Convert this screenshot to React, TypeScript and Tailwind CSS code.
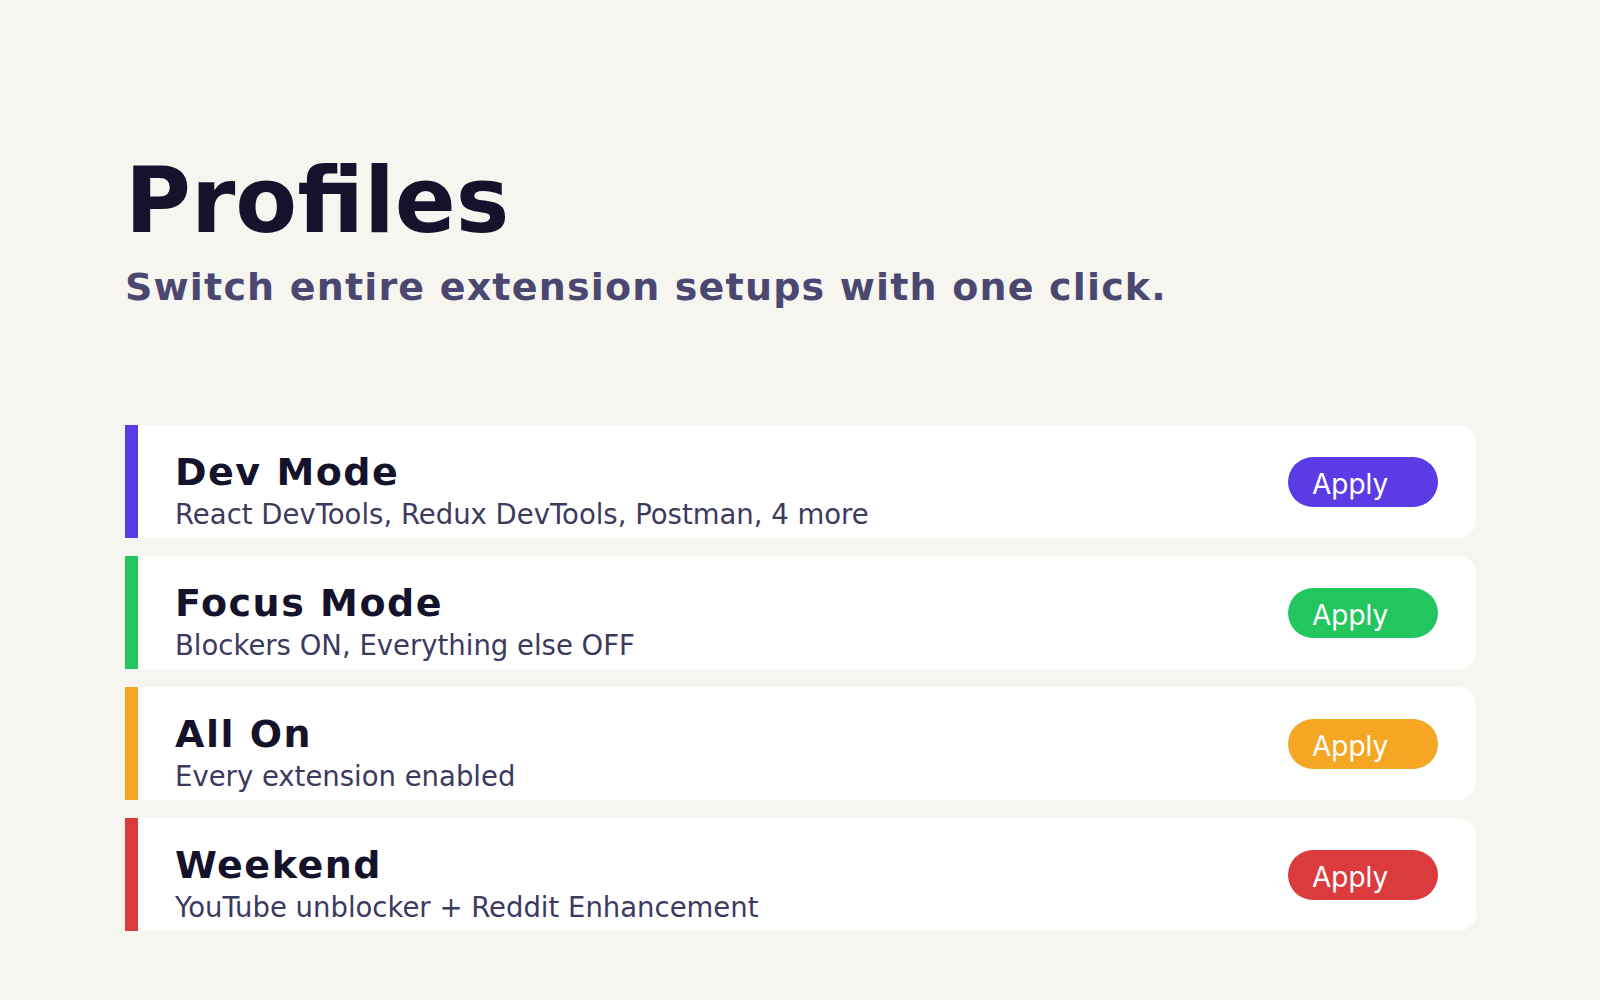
const profiles = [
  { name: "Dev Mode", detail: "React DevTools, Redux DevTools, Postman, 4 more", bar: "bg-[#5a3be6]", button: "bg-[#5a3be6]" },
  { name: "Focus Mode", detail: "Blockers ON, Everything else OFF", bar: "bg-[#22c55e]", button: "bg-[#22c55e]" },
  { name: "All On", detail: "Every extension enabled", bar: "bg-[#f5a623]", button: "bg-[#f5a623]" },
  { name: "Weekend", detail: "YouTube unblocker + Reddit Enhancement", bar: "bg-[#dc3b3d]", button: "bg-[#dc3b3d]" },
]

function ProfileCard({ name, detail, bar, button }: (typeof profiles)[number]) {
  return (
    <div className="flex h-[113px] items-stretch overflow-hidden rounded-r-[18px] bg-white">
      <div className={`w-[13px] shrink-0 ${bar}`} />
      <div className="flex-1 pl-[37px] pt-[25px]">
        <div className="text-[38px] font-bold leading-[44px] tracking-[0.04em] text-[#14132b]">{name}</div>
        <div className="mt-[4px] text-[27.5px] leading-[32px] text-[#3c3a5e]">{detail}</div>
      </div>
      <div className="flex items-center pr-[38px]">
        <button
          className={`h-[50px] w-[150px] rounded-full pl-[24px] pt-[4px] text-left font-['Inter',sans-serif] text-[28px] leading-none text-white ${button}`}
        >
          Apply
        </button>
      </div>
    </div>
  )
}

export default function App() {
  return (
    <div className="min-h-screen bg-[#f7f5f0] pl-[125px] pr-[124px] pt-[156px] font-['DejaVu_Sans',sans-serif]">
      <h1 className="text-[90px] font-bold leading-[90px] text-[#14132b]">Profiles</h1>
      <p className="mt-[19px] text-[38px] font-bold leading-[44px] tracking-[0.031em] text-[#4a4870]">
        Switch entire extension setups with one click.
      </p>
      <div className="mt-[116px] flex flex-col gap-[18px]">
        {profiles.map(profile => (
          <ProfileCard key={profile.name} {...profile} />
        ))}
      </div>
    </div>
  )
}
